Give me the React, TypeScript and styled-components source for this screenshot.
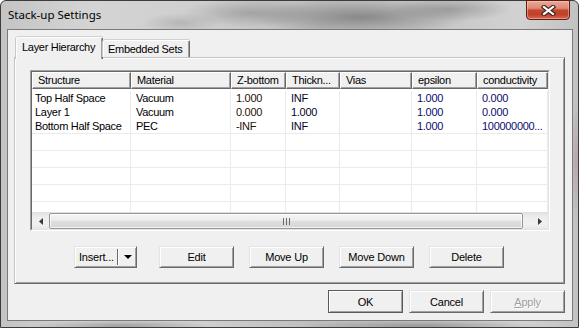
import React from 'react';
import styled, { createGlobalStyle } from 'styled-components';

const Global = createGlobalStyle`
  html, body { margin: 0; padding: 0; background: #ffffff; }
  #root { width: 579px; height: 328px; }
`;

const COLS = '99px 100px 55px 54px 72px 65px 71px';
const UI_FONT = `"Liberation Sans", Arial, sans-serif`;

const Win = styled.div`
  box-sizing: border-box;
  width: 579px;
  height: 328px;
  border: 1px solid #3c3c3c;
  border-radius: 6px 6px 0 0;
  padding: 0 5px 6px 6px;
  display: flex;
  flex-direction: column;
  font-family: ${UI_FONT};
  background:
    radial-gradient(ellipse 70px 14px at 250px 12px, rgba(120, 120, 120, 0.45), transparent),
    radial-gradient(ellipse 110px 18px at 360px 16px, rgba(100, 100, 100, 0.6), transparent),
    radial-gradient(ellipse 60px 12px at 450px 8px, rgba(110, 110, 110, 0.45), transparent),
    radial-gradient(ellipse 40px 10px at 180px 22px, rgba(120, 120, 120, 0.3), transparent),
    radial-gradient(ellipse 90px 6px at 120px 325px, rgba(110, 110, 110, 0.5), transparent),
    radial-gradient(ellipse 120px 6px at 420px 325px, rgba(110, 110, 110, 0.5), transparent),
    radial-gradient(ellipse 6px 60px at 575px 160px, rgba(150, 80, 80, 0.25), transparent),
    linear-gradient(90deg, #c4c4c4 0%, #d4d4d4 15%, #cfcfcf 35%, #bdbdbd 55%, #c6c6c6 75%, #d2d2d2 90%, #c2c2c2 100%);
`;

const TitleBar = styled.div`
  height: 28px;
  display: flex;
  align-items: flex-start;
  padding-left: 1px;
`;

const Title = styled.div`
  margin-top: 6px;
  font-family: "Segoe UI", "Noto Sans", sans-serif;
  font-size: 11.5px;
  line-height: 16px;
  color: #000;
`;

const CloseButton = styled.div`
  box-sizing: border-box;
  margin-left: auto;
  margin-right: 3px;
  margin-top: -1px;
  width: 44px;
  height: 20px;
  border: 1px solid #5e1e14;
  border-radius: 0 0 4px 4px;
  display: flex;
  align-items: center;
  justify-content: center;
  background: linear-gradient(
    to bottom,
    #e9aa9a 0%,
    #dc8a75 40%,
    #c5452c 52%,
    #c0402a 75%,
    #d56b52 100%
  );
  box-shadow: inset 0 0 0 1px rgba(255, 210, 200, 0.45);
`;

const Client = styled.div`
  flex: 1;
  border: 1px solid #7a7a7a;
  background: #f0f0f0;
  display: flex;
  flex-direction: column;
  padding: 7px 7px 7px 6px;
`;

const TabStrip = styled.div`
  height: 20px;
  display: flex;
  align-items: flex-end;
  padding-left: 2px;
  position: relative;
  z-index: 1;
`;

const Tab = styled.div<{ $active?: boolean }>`
  box-sizing: border-box;
  width: 87px;
  height: ${(p) => (p.$active ? '22px' : '17px')};
  margin-bottom: ${(p) => (p.$active ? '-2px' : '0')};
  padding: ${(p) => (p.$active ? '2px 0 0 5px' : '1px 0 0 4px')};
  background: #f0f0f0;
  border-top: 1px solid #ffffff;
  border-left: 1px solid #ffffff;
  border-right: 1px solid #696969;
  border-radius: 2px 2px 0 0;
  box-shadow: inset -1px 0 #a0a0a0, -1px 0 #c8c8c8, 0 -1px #d0d0d0;
  font-size: 11px;
  letter-spacing: -0.3px;
  line-height: 14px;
  color: #000;
  white-space: nowrap;
`;

const Panel = styled.div`
  box-sizing: border-box;
  height: 227px;
  border: 1px solid;
  border-color: #c4c4c4 #696969 #696969 #c4c4c4;
  box-shadow: inset 1px 1px #ffffff, inset -1px -1px #a0a0a0;
  padding: 12px 14px 0 15px;
  display: flex;
  flex-direction: column;
`;

const ListFrame = styled.div`
  box-sizing: border-box;
  height: 161px;
  border: 1px solid;
  border-color: #a0a0a0 #ffffff #ffffff #a0a0a0;
  display: flex;
`;

const ListInner = styled.div`
  flex: 1;
  border: 1px solid;
  border-color: #696969 #e3e3e3 #e3e3e3 #696969;
  background: #ffffff;
  display: flex;
  flex-direction: column;
  overflow: hidden;
`;

const HeaderRow = styled.div`
  display: grid;
  grid-template-columns: ${COLS};
  height: 17px;
  flex: none;
`;

const HeaderCell = styled.div`
  box-sizing: border-box;
  border-top: 1px solid #ffffff;
  border-left: 1px solid #ffffff;
  border-right: 1px solid #696969;
  border-bottom: 1px solid #696969;
  box-shadow: inset -1px -1px #a0a0a0;
  background: #f0f0f0;
  padding-left: 5px;
  font-size: 11px;
  letter-spacing: -0.3px;
  line-height: 14px;
  color: #000;
  white-space: nowrap;
  overflow: hidden;
`;

const Body = styled.div`
  flex: 1;
  overflow: hidden;
`;

const Row = styled.div<{ $empty?: boolean; $first?: boolean; $line?: boolean }>`
  box-sizing: border-box;
  display: grid;
  grid-template-columns: ${COLS};
  height: ${(p) => (p.$empty ? '17px' : p.$first ? '16px' : p.$line ? '15px' : '14px')};
  padding-top: ${(p) => (p.$first ? '2px' : '0')};
  border-bottom: ${(p) => (p.$empty || p.$line ? '1px solid #ebebeb' : 'none')};
`;

const Cell = styled.div<{ $tone?: string }>`
  border-right: 1px solid #ebebeb;
  padding-left: 5px;
  font-size: 11px;
  letter-spacing: -0.3px;
  line-height: 14px;
  color: ${(p) => p.$tone || '#000'};
  white-space: nowrap;
  overflow: hidden;
  &:first-child {
    padding-left: 3px;
  }
`;

const ScrollBar = styled.div`
  flex: none;
  height: 16px;
  display: flex;
  background: linear-gradient(to bottom, #e3e3e3, #eeeeee 30%, #f0f0f0 70%, #e8e8e8);
  border-top: 1px solid #e0e0e0;
`;

const ScrollArrow = styled.div`
  width: 17px;
  display: flex;
  align-items: center;
  justify-content: center;
`;

const ScrollThumb = styled.div`
  box-sizing: border-box;
  width: 474px;
  border: 1px solid #979797;
  border-radius: 2px;
  background: linear-gradient(to bottom, #f6f6f6 0%, #ececec 45%, #dedede 52%, #d6d6d6 100%);
  box-shadow: inset 0 0 0 1px rgba(255, 255, 255, 0.7);
  display: flex;
  align-items: center;
  justify-content: center;
`;

const ScrollRest = styled.div`
  flex: 1;
`;

const ButtonRow = styled.div`
  display: flex;
  justify-content: center;
  gap: 15px;
  margin-top: 15px;
  margin-left: -2px;
`;

const Button = styled.div<{ $w?: number; $h?: number; $default?: boolean; $disabled?: boolean }>`
  box-sizing: border-box;
  width: ${(p) => p.$w ?? 75}px;
  height: ${(p) => p.$h ?? 22}px;
  background: #f0f0f0;
  border: 1px solid;
  border-color: ${(p) =>
    p.$default ? '#5a5a5a' : '#e3e3e3 #696969 #696969 #e3e3e3'};
  box-shadow: inset 1px 1px #ffffff, inset -1px -1px #a0a0a0;
  display: flex;
  align-items: center;
  justify-content: center;
  font-size: 11px;
  letter-spacing: -0.2px;
  color: ${(p) => (p.$disabled ? '#a0a0a0' : '#000')};
  text-shadow: ${(p) => (p.$disabled ? '1px 1px #ffffff' : 'none')};
  white-space: nowrap;
`;

const SplitButton = styled(Button)`
  justify-content: flex-start;
  padding-left: 4px;
  margin-right: 7px;
`;

const SplitDivider = styled.div`
  width: 1px;
  height: 16px;
  background: #696969;
  box-shadow: 1px 0 #ffffff;
  margin-left: 3px;
`;

const SplitCaret = styled.div`
  margin-left: 6px;
  display: flex;
  align-items: center;
`;

const Underline = styled.span`
  text-decoration: underline;
`;

const FooterRow = styled.div`
  display: flex;
  justify-content: flex-end;
  gap: 6px;
  margin-top: 6px;
`;

const headers = ['Structure', 'Material', 'Z-bottom', 'Thickn...', 'Vias', 'epsilon', 'conductivity'];
const tones = ['#000000', '#000000', '#1e1204', '#040426', '#000000', '#0c0c70', '#0c0c70'];
const rows = [
  ['Top Half Space', 'Vacuum', '1.000', 'INF', '', '1.000', '0.000'],
  ['Layer 1', 'Vacuum', '0.000', '1.000', '', '1.000', '0.000'],
  ['Bottom Half Space', 'PEC', '-INF', 'INF', '', '1.000', '100000000...'],
];

const emptyCells = headers.map((h) => <Cell key={h} />);

export default function App() {
  return (
    <>
      <Global />
      <Win>
        <TitleBar>
          <Title>Stack-up Settings</Title>
          <CloseButton>
            <svg width="15" height="11" viewBox="0 0 15 11">
              <path d="M3 2 L12 9 M12 2 L3 9" stroke="#3d2520" strokeWidth="4.4" strokeLinecap="square" />
              <path d="M3 2 L12 9 M12 2 L3 9" stroke="#ffffff" strokeWidth="2.2" strokeLinecap="square" />
            </svg>
          </CloseButton>
        </TitleBar>
        <Client>
          <TabStrip>
            <Tab $active>Layer Hierarchy</Tab>
            <Tab>Embedded Sets</Tab>
          </TabStrip>
          <Panel>
            <ListFrame>
              <ListInner>
                <HeaderRow>
                  {headers.map((h) => (
                    <HeaderCell key={h}>{h}</HeaderCell>
                  ))}
                </HeaderRow>
                <Body>
                  {rows.map((r, i) => (
                    <Row key={i} $first={i === 0} $line={i === rows.length - 1}>
                      {r.map((c, j) => (
                        <Cell key={j} $tone={tones[j]}>
                          {c}
                        </Cell>
                      ))}
                    </Row>
                  ))}
                  {[0, 1, 2, 3].map((k) => (
                    <Row key={`e${k}`} $empty>
                      {emptyCells}
                    </Row>
                  ))}
                  <Row>{emptyCells}</Row>
                </Body>
                <ScrollBar>
                  <ScrollArrow>
                    <svg width="4" height="7" viewBox="0 0 4 7">
                      <polygon points="4,0 0,3.5 4,7" fill="#3a3a3a" />
                    </svg>
                  </ScrollArrow>
                  <ScrollThumb>
                    <svg width="7" height="7" viewBox="0 0 7 7">
                      <rect x="0" y="0" width="1" height="7" fill="#6a6a6a" />
                      <rect x="3" y="0" width="1" height="7" fill="#6a6a6a" />
                      <rect x="6" y="0" width="1" height="7" fill="#6a6a6a" />
                    </svg>
                  </ScrollThumb>
                  <ScrollRest />
                  <ScrollArrow>
                    <svg width="4" height="7" viewBox="0 0 4 7">
                      <polygon points="0,0 4,3.5 0,7" fill="#3a3a3a" />
                    </svg>
                  </ScrollArrow>
                </ScrollBar>
              </ListInner>
            </ListFrame>
            <ButtonRow>
              <SplitButton $w={63}>
                <span>Insert...</span>
                <SplitDivider />
                <SplitCaret>
                  <svg width="8" height="4" viewBox="0 0 8 4">
                    <polygon points="0,0 8,0 4,4" fill="#000" />
                  </svg>
                </SplitCaret>
              </SplitButton>
              <Button>Edit</Button>
              <Button>Move Up</Button>
              <Button>Move Down</Button>
              <Button>Delete</Button>
            </ButtonRow>
          </Panel>
          <FooterRow>
            <Button $h={23} $default>
              OK
            </Button>
            <Button $h={23}>Cancel</Button>
            <Button $h={23} $disabled>
              <Underline>A</Underline>pply
            </Button>
          </FooterRow>
        </Client>
      </Win>
    </>
  );
}
